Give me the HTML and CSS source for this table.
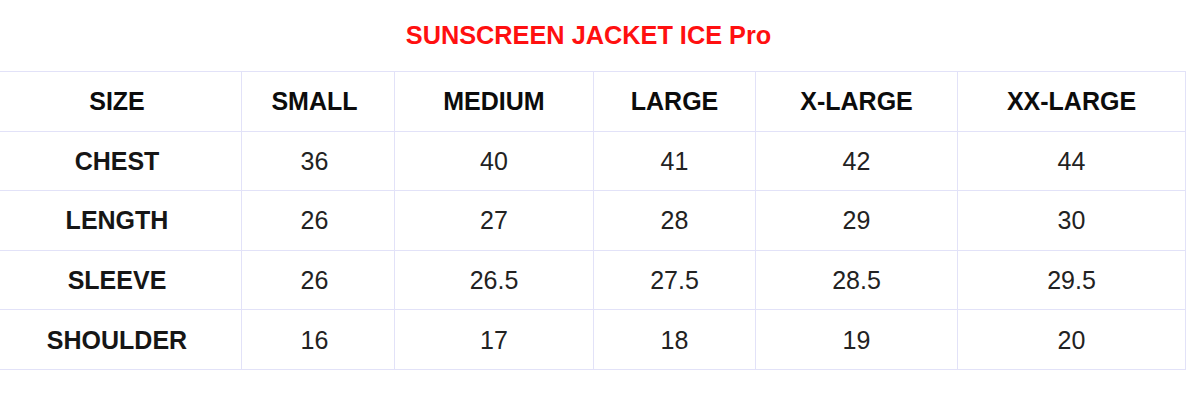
FILE: index.html
```html
<!DOCTYPE html>
<html lang="en">
<head>
<meta charset="utf-8">
<title>Size Chart</title>
<link rel="stylesheet" href="styles.css">
</head>
<body>
<div class="chart">
  <h2 class="chart-title">SUNSCREEN JACKET ICE Pro</h2>
  <table class="size-table">
    <thead>
      <tr>
        <th>SIZE</th><th>SMALL</th><th>MEDIUM</th><th>LARGE</th><th>X-LARGE</th><th>XX-LARGE</th>
      </tr>
    </thead>
    <tbody>
      <tr><th>CHEST</th><td>36</td><td>40</td><td>41</td><td>42</td><td>44</td></tr>
      <tr><th>LENGTH</th><td>26</td><td>27</td><td>28</td><td>29</td><td>30</td></tr>
      <tr><th>SLEEVE</th><td>26</td><td>26.5</td><td>27.5</td><td>28.5</td><td>29.5</td></tr>
      <tr><th>SHOULDER</th><td>16</td><td>17</td><td>18</td><td>19</td><td>20</td></tr>
    </tbody>
  </table>
</div>
</body>
</html>
```

FILE: styles.css
```css
html, body {
  margin: 0;
  padding: 0;
  background: #ffffff;
}

body {
  font-family: "Liberation Sans", Arial, sans-serif;
}

.chart {
  width: 1187px;
  margin-left: -1px;
}

.chart-title {
  margin: 0;
  padding: 21px 8px 0 0;
  height: 71px;
  box-sizing: border-box;
  text-align: center;
  font-size: 25.3px;
  line-height: 28px;
  font-weight: 700;
  color: #ff1010;
}

.size-table {
  width: 1187px;
  border-collapse: collapse;
  table-layout: fixed;
}

.size-table th,
.size-table td {
  border: 1px solid #e2e2f8;
  height: 58.6px;
  padding: 0;
  text-align: center;
  vertical-align: middle;
  font-size: 25px;
  line-height: 28px;
}

.size-table th {
  font-weight: 700;
  color: #161616;
}

.size-table thead th {
  color: #0c0c0c;
}

.size-table td {
  font-weight: 400;
  color: #222222;
}

.size-table tr > :nth-child(1),
.size-table tr > :nth-child(2) {
  padding-right: 7px;
}

.size-table th:nth-child(1) { width: 234px; }
.size-table th:nth-child(2) { width: 145px; }
.size-table th:nth-child(3) { width: 198px; }
.size-table th:nth-child(4) { width: 161px; }
.size-table th:nth-child(5) { width: 201px; }
.size-table th:nth-child(6) { width: 227px; }
```
